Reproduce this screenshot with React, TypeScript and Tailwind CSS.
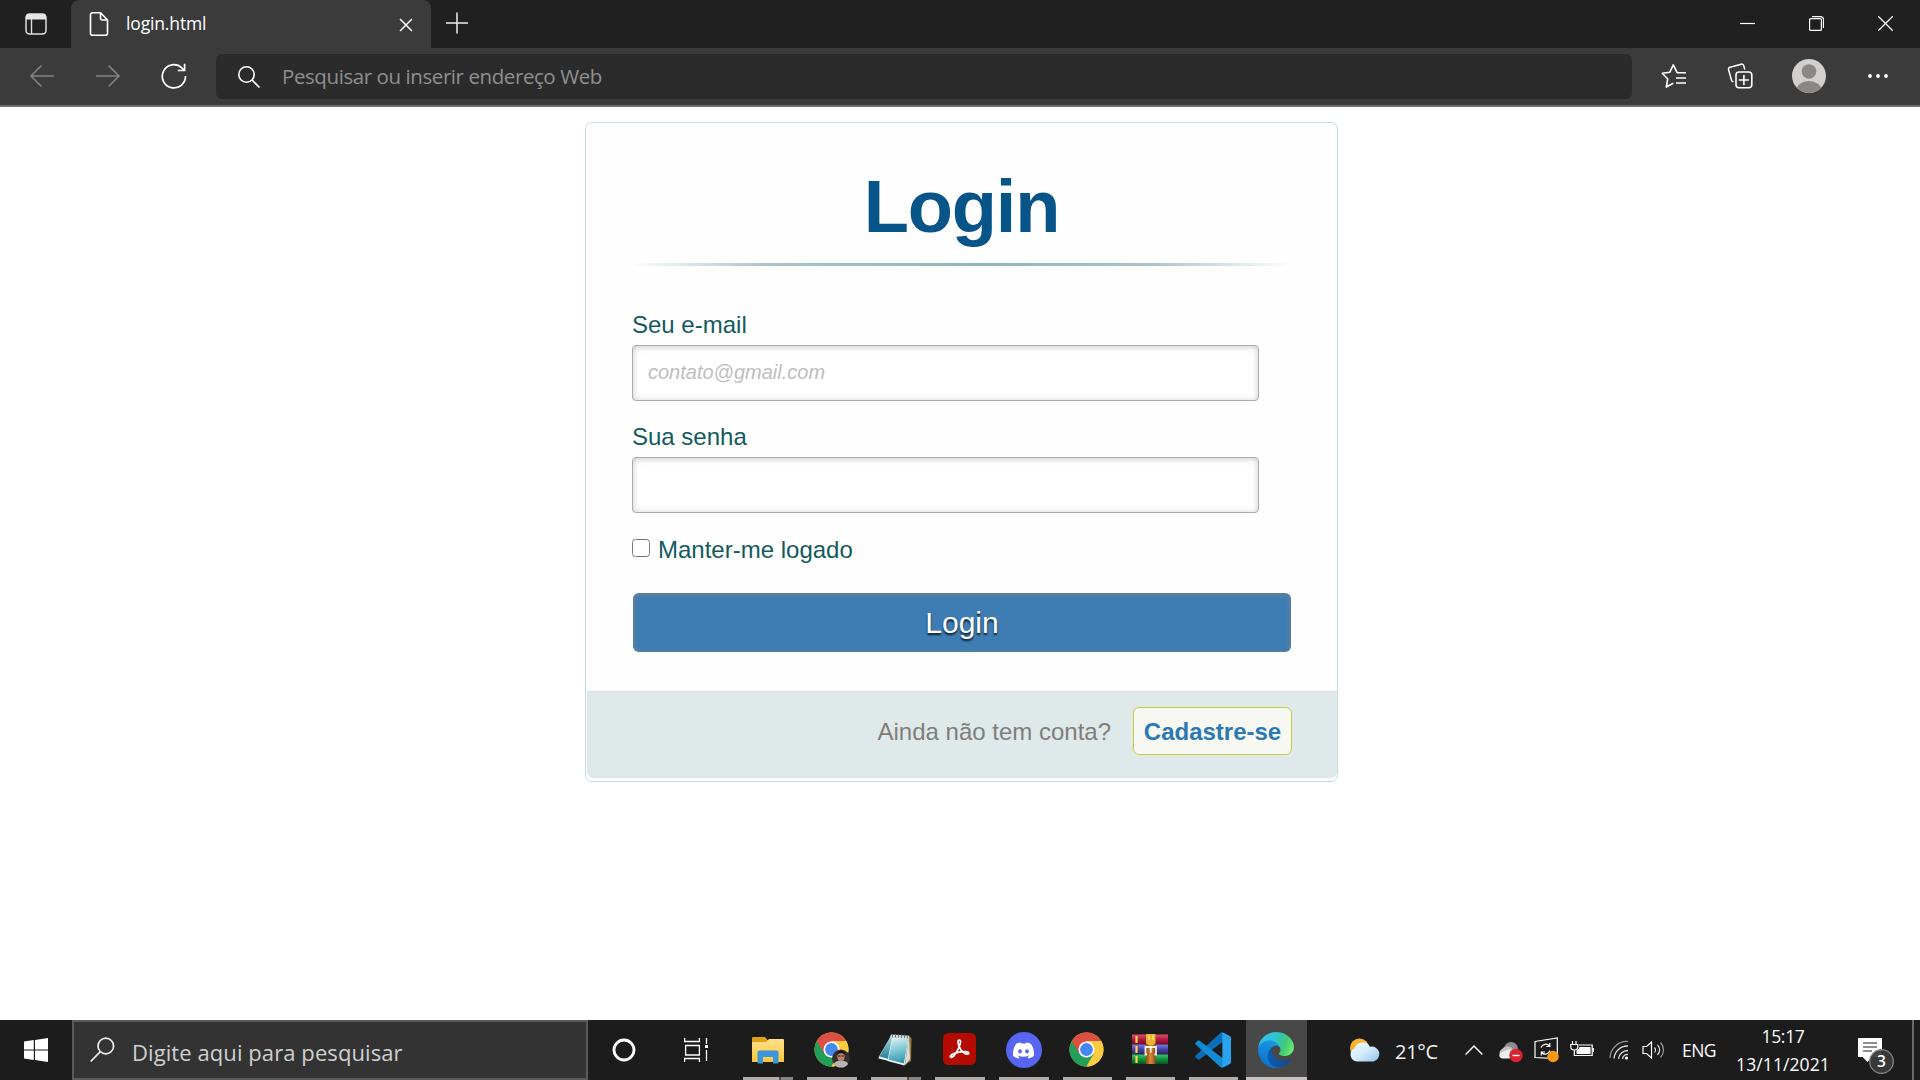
import React from "react";
import { FaDiscord } from "react-icons/fa";

type IconProps = { w: number; h: number; children: React.ReactNode; className?: string };

function Icon({ w, h, children, className = "" }: IconProps) {
  return (
    <svg width={w} height={h} viewBox={`0 0 ${w} ${h}`} fill="none" className={`block shrink-0 ${className}`}>
      {children}
    </svg>
  );
}

/* ---------- browser window ---------- */

function TitleBar() {
  return (
    <div className="flex h-12 bg-[#202020]">
      <div className="flex w-[71px] shrink-0 pl-[25px] pt-[13px]">
        <Icon w={22} h={22}>
          <rect x="1" y="1" width="20" height="20" rx="3.5" stroke="#ddd" strokeWidth="1.5" />
          <path d="M1 6.5V4a3 3 0 0 1 3-3h14a3 3 0 0 1 3 3v2.500z" fill="#e6e6e6" />
          <path d="M6.500 6v15" stroke="#ddd" strokeWidth="1.400" />
        </Icon>
      </div>
      <div className="flex h-12 w-[360px] shrink-0 rounded-t-lg bg-[#3b3b3b] pl-[18px]">
        <Icon w={20} h={26} className="mt-[11px]">
          <path
            d="M11.500 1.800H3.500a2 2 0 0 0-2 2v18.400a2 2 0 0 0 2 2h13a2 2 0 0 0 2-2V9zM11.500 1.800V7a2 2 0 0 0 2 2h5"
            stroke="#fff"
            strokeWidth="1.600"
            strokeLinejoin="round"
          />
        </Icon>
        <span className="ml-[17px] mt-[10px] w-[273px] whitespace-nowrap text-[17.5px] leading-[26px] tracking-[-0.15px] text-white">
          login.html
        </span>
        <Icon w={14} h={14} className="mt-[18px]">
          <path d="M1 1l12 12M13 1L1 13" stroke="#fff" strokeWidth="1.500" />
        </Icon>
      </div>
      <Icon w={22} h={22} className="ml-[15px] mt-3">
        <path d="M0 11h22M11 0.500v21" stroke="#eee" strokeWidth="1.500" />
      </Icon>
      <div className="ml-auto flex">
        <div className="flex w-[69px] justify-center pt-4">
          <Icon w={15} h={15}>
            <path d="M0 7.500h15" stroke="#fff" strokeWidth="1.200" />
          </Icon>
        </div>
        <div className="flex w-[69px] justify-center pt-4">
          <Icon w={15} h={15}>
            <rect x="0.600" y="2.600" width="11.800" height="11.800" rx="1" stroke="#fff" strokeWidth="1.200" />
            <path d="M3 0.600h8.500a3 3 0 0 1 3 3V12" stroke="#fff" strokeWidth="1.200" />
          </Icon>
        </div>
        <div className="flex w-[69px] justify-center pt-4">
          <Icon w={15} h={15}>
            <path d="M0.300 0.300l14.400 14.400M14.700 0.300L0.300 14.700" stroke="#fff" strokeWidth="1.300" />
          </Icon>
        </div>
      </div>
    </div>
  );
}

function ToolButton({ children, wide = false }: { children: React.ReactNode; wide?: boolean }) {
  return <div className={`flex h-[56px] shrink-0 items-center justify-center ${wide ? "w-[72px]" : "w-[66px]"}`}>{children}</div>;
}

function Toolbar() {
  return (
    <div className="flex h-[59px] border-b-2 border-[#6b6b6b] bg-[#3b3b3b] px-[9px]">
      <ToolButton>
        <Icon w={26} h={24}>
          <path d="M25 12H2M12.500 1.500L2 12l10.500 10.500" stroke="#858585" strokeWidth="1.500" />
        </Icon>
      </ToolButton>
      <ToolButton>
        <Icon w={26} h={24}>
          <path d="M1 12h23M13.500 1.500L24 12 13.500 22.500" stroke="#858585" strokeWidth="1.500" />
        </Icon>
      </ToolButton>
      <ToolButton>
        <Icon w={26} h={26}>
          <path d="M24.500 13A11.600 11.600 0 1 1 20.800 4.800L23.300 7.300" stroke="#fff" strokeWidth="1.700" />
          <path d="M23.600 0.800v6.700h-6.800" stroke="#fff" strokeWidth="1.700" />
        </Icon>
      </ToolButton>
      <div className="ml-[9px] mt-[6px] flex h-[45px] w-[1416px] shrink-0 items-center rounded-md bg-[#2b2b2b] pl-[21px]">
        <Icon w={24} h={24}>
          <circle cx="9.500" cy="9.500" r="7.700" stroke="#fff" strokeWidth="1.600" />
          <path d="M15 15l7.500 7.500" stroke="#fff" strokeWidth="1.700" />
        </Icon>
        <span className="-mt-[2px] ml-[21px] whitespace-nowrap text-[20.5px] leading-[28px] tracking-[-0.42px] text-[#8f8f8f]">
          Pesquisar ou inserir endereço Web
        </span>
      </div>
      <div className="ml-[9px] flex">
        <ToolButton>
          <Icon w={26} h={26}>
            <path
              d="M25 9.700H16.200L12.300 1.800 8.800 9.200 1.300 10.300 6.700 16 5.300 24 12.300 20.300M15 15h10M15 20h10"
              stroke="#fff"
              strokeWidth="1.600"
              strokeLinejoin="round"
            />
          </Icon>
        </ToolButton>
        <ToolButton>
          <Icon w={26} h={26}>
            <path
              d="M17.800 6.500L16.700 2.600a2 2 0 0 0-2.500-1.400L3 4.300A2 2 0 0 0 1.600 6.700L4.500 17.200a2.400 2.400 0 0 0 2 1.600"
              stroke="#fff"
              strokeWidth="1.500"
            />
            <rect x="9" y="9" width="15.800" height="15.800" rx="3" stroke="#fff" strokeWidth="1.600" />
            <path d="M16.900 12v10M11.900 17h10" stroke="#fff" strokeWidth="1.600" />
          </Icon>
        </ToolButton>
        <ToolButton wide>
          <Icon w={34} h={34}>
            <clipPath id="avatar">
              <circle cx="17" cy="17" r="17" />
            </clipPath>
            <g clipPath="url(#avatar)">
              <rect width="34" height="34" fill="#d2d0ce" />
              <circle cx="17" cy="12.500" r="7.300" fill="#8a8886" />
              <ellipse cx="17" cy="31.500" rx="12.500" ry="9.500" fill="#8a8886" />
            </g>
          </Icon>
        </ToolButton>
        <ToolButton>
          <Icon w={22} h={6}>
            <circle cx="3" cy="3" r="1.900" fill="#fff" />
            <circle cx="11" cy="3" r="1.900" fill="#fff" />
            <circle cx="19" cy="3" r="1.900" fill="#fff" />
          </Icon>
        </ToolButton>
      </div>
    </div>
  );
}

/* ---------- login page ---------- */

const fieldClass =
  "block h-14 w-[627px] rounded-[4px] border border-[#ababab] bg-white px-[15px] pb-[1px] text-[20px] shadow-[inset_0_1px_6px_rgba(150,150,150,0.5)] outline-none placeholder:italic placeholder:text-[#bebebe] placeholder:opacity-100";

function LoginCard() {
  return (
    <form className="ml-[585px] mt-[15px] flex h-[660px] w-[753px] flex-col rounded-[7px] border border-[#c6dde2] bg-[#fefefe] font-['Liberation_Sans',Arial,sans-serif]">
      <div className="flex-1 px-[46px] pt-[43px]">
        <h1 className="text-center text-[74px] font-bold leading-[82px] tracking-[-1.2px] text-[#075488]">Login</h1>
        <div className="mt-[15px] h-[3px] bg-[linear-gradient(to_right,rgba(147,184,189,0)_0%,rgba(147,184,189,0.8)_20%,rgba(147,180,184,1)_53%,rgba(147,184,189,0.8)_79%,rgba(147,184,189,0)_100%)]" />
        <label htmlFor="email" className="mt-[45px] block text-[24px] leading-[28px] text-[#135a5f]">
          Seu e-mail
        </label>
        <input id="email" placeholder="contato@gmail.com" className={`${fieldClass} mt-[6px]`} />
        <label htmlFor="senha" className="mt-[22px] block text-[24px] leading-[28px] text-[#135a5f]">
          Sua senha
        </label>
        <input id="senha" type="password" className={`${fieldClass} mt-[6px]`} />
        <label className="mt-[23px] flex h-7 text-[24px] leading-[28px] text-[#135a5f]">
          <input
            type="checkbox"
            className="mt-[3px] block size-[18px] shrink-0 appearance-none rounded-[3.5px] border-[1.5px] border-[#767676] bg-white"
          />
          <span className="ml-[8px]">Manter-me logado</span>
        </label>
        <button
          type="button"
          className="ml-px mt-[29px] block h-[59px] w-[658px] rounded-[6px] bg-[#3d7db3] text-[30px] leading-[59px] text-white shadow-[inset_0_1px_5px_1px_rgba(116,131,145,0.8)] [text-shadow:0_2px_2px_rgba(0,0,0,0.8)]"
        >
          Login
        </button>
      </div>
      <div className="mb-[3px] ml-px flex h-[87px] justify-end rounded-b-[6px] border-t border-[#d3e2e5] bg-[#e0e9e9] pr-[45px] pt-[15px] text-[24px]">
        <span className="mr-[22px] leading-[50px] text-[#7f7d7c]">Ainda não tem conta?</span>
        <a className="h-12 w-[159px] rounded-[6px] border border-[#c2ce3c] bg-[#f7f8f1] text-center font-bold leading-[48px] text-[#2a78b4]">
          Cadastre-se
        </a>
      </div>
    </form>
  );
}

/* ---------- taskbar icons ---------- */

function FolderIcon() {
  return (
    <Icon w={32} h={28}>
      <defs>
        <linearGradient id="folder" x1="0" y1="0" x2="0" y2="1">
          <stop offset="0" stopColor="#ffe08a" />
          <stop offset="1" stopColor="#fbc83c" />
        </linearGradient>
      </defs>
      <path d="M0 2a1 1 0 0 1 1-1h12l2.500 3H30v6H0z" fill="#dba21a" />
      <path d="M0 6h14l3-3h14a1 1 0 0 1 1 1v22H0z" fill="url(#folder)" />
      <path d="M5.500 27.500v-11a2 2 0 0 1 2-2h17a2 2 0 0 1 2 2v11H21v-5.500a1 1 0 0 0-1-1h-8a1 1 0 0 0-1 1v5.500z" fill="#3a96dd" />
    </Icon>
  );
}

function ChromeIcon({ profile = false }: { profile?: boolean }) {
  return (
    <Icon w={36} h={36}>
      <circle cx="17.500" cy="17.500" r="17" fill="#fbc93a" />
      <path d="M17.500 17.500L25 21.800 17.500 34.500A17 17 0 0 1 2.800 9z" fill="#1f9f57" />
      <path d="M25 21.800L17.500 34.500A17 17 0 0 0 32.200 9H17.500z" fill="#fccb3f" />
      <path d="M2.800 9A17 17 0 0 1 32.200 9H17.500L10 21.800z" fill="#dd4f43" />
      <circle cx="17.500" cy="17.500" r="8" fill="#fff" />
      <circle cx="17.500" cy="17.500" r="6.400" fill="#4688f1" />
      {profile && (
        <>
          <circle cx="27" cy="26.500" r="9" fill="#35302e" />
          <path d="M19.800 32a7.500 5 0 0 1 14.400 0 9 9 0 0 1-14.400 0z" fill="#b9b4b3" />
          <ellipse cx="27" cy="24.500" rx="3.700" ry="5" fill="#b98570" />
          <path d="M22.800 23c0-6 8.400-6 8.400 0-2-2.500-6-2.500-8.400 0z" fill="#191413" />
          <path d="M24 24h2.500M27.500 24H30" stroke="#2b1c19" strokeWidth="1" />
        </>
      )}
    </Icon>
  );
}

function NotepadIcon() {
  return (
    <Icon w={36} h={34}>
      <defs>
        <linearGradient id="pad" x1="0.300" y1="0" x2="0.500" y2="1">
          <stop offset="0" stopColor="#e3f3f5" />
          <stop offset="0.450" stopColor="#8accd8" />
          <stop offset="1" stopColor="#2f96ac" />
        </linearGradient>
        <linearGradient id="padBack" x1="0" y1="0" x2="0" y2="1">
          <stop offset="0" stopColor="#a9dbe3" />
          <stop offset="1" stopColor="#1f7f95" />
        </linearGradient>
      </defs>
      <path d="M31 4l2.500 1-.5 23-7 4z" fill="#9a7a38" />
      <path d="M31 3l1 23-5 6.500z" fill="#d6dcdc" />
      <path d="M13 3L1 23.500 0.500 25.500 11 28 20 4z" fill="#e9f0f1" />
      <path d="M13 3L1.500 23.500 11 26 20 4z" fill="url(#padBack)" />
      <path d="M14.500 3L31 4 26.500 32.500 9.500 28z" fill="#eef3f3" />
      <path d="M15 4L30.500 5 25.800 30.500 10.500 26.500z" fill="url(#pad)" />
      <path d="M13 1.500l18.500 1.300-.4 3L12 4.500z" fill="#d4d9d9" />
      <path d="M14.500 1v3.500M17.500 1v3.500M20.500 1.200v3.500M23.500 1.500V5M26.500 1.700v3.500M29.500 2v3.500" stroke="#6b777b" strokeWidth="1" />
    </Icon>
  );
}

function AcrobatIcon() {
  return (
    <Icon w={33} h={32}>
      <rect width="33" height="32" rx="5.500" fill="#b30b00" />
      <path
        d="M15 9.500c-.5-3 3-3.300 2.500-.3-.4 2.800-3 9-6.300 13.200-1.500 1.900-4.700 3-3.700.6 1.200-2.600 9-4.400 15-4.300 4.200.1 4 2.800 1.300 2.400-3.800-.5-8.300-6-8.800-11.600z"
        stroke="#fff"
        strokeWidth="1.700"
        strokeLinejoin="round"
      />
    </Icon>
  );
}

function DiscordIcon() {
  return (
    <div className="mr-px flex size-9 items-center justify-center rounded-full bg-[#5865f2]">
      <FaDiscord size={23} color="#fff" />
    </div>
  );
}

function WinrarIcon() {
  return (
    <Icon w={36} h={32}>
      <defs>
        <linearGradient id="bookA" x1="0" y1="0" x2="0" y2="1">
          <stop offset="0" stopColor="#e0506a" />
          <stop offset="0.500" stopColor="#b3183f" />
          <stop offset="1" stopColor="#6f0d28" />
        </linearGradient>
        <linearGradient id="bookB" x1="0" y1="0" x2="0" y2="1">
          <stop offset="0" stopColor="#7d7ad8" />
          <stop offset="0.500" stopColor="#4642a5" />
          <stop offset="1" stopColor="#25225f" />
        </linearGradient>
        <linearGradient id="bookC" x1="0" y1="0" x2="0" y2="1">
          <stop offset="0" stopColor="#3fc463" />
          <stop offset="0.500" stopColor="#12903c" />
          <stop offset="1" stopColor="#075320" />
        </linearGradient>
        <linearGradient id="strap" x1="0" y1="0" x2="1" y2="0">
          <stop offset="0" stopColor="#8f4a12" />
          <stop offset="0.500" stopColor="#d98a3a" />
          <stop offset="1" stopColor="#8f4a12" />
        </linearGradient>
      </defs>
      <rect y="1.500" width="36" height="10" fill="url(#bookA)" />
      <rect y="11.500" width="36" height="10" fill="url(#bookB)" />
      <rect y="21.500" width="36" height="9.500" fill="url(#bookC)" />
      <path d="M4.500 3v7M4.500 13v7M4.500 23v7" stroke="#ffd54a" strokeWidth="2.200" />
      <rect x="14" y="1" width="9.500" height="30" fill="url(#strap)" />
      <path d="M14 1h9.500v9l-2 2h-5.500l-2-2z" fill="#e8b32f" />
      <path d="M17 2v5M21 2v5" stroke="#fff0a0" strokeWidth="1" />
      <path d="M15 21.500h-1.500v-7.500h10.500v7.500h-1.500" stroke="#f0ece6" strokeWidth="1.800" />
      <path d="M18.700 13.500v6" stroke="#fff" strokeWidth="1.600" />
    </Icon>
  );
}

function VsCodeIcon() {
  return (
    <svg width="36" height="36" viewBox="0 0 100 100" className="mr-px block">
      <path d="M97 13L78 3Q73 0 69 4L2 65q-3 3 0 5.500l6 5.500q2.500 2 5 0L76 28z" fill="#0a6fb8" />
      <path d="M97 87L78 97q-5 3-9-1L2 35q-3-3 0-5.500L8 24q2.500-2 5 0l63 48z" fill="#128bd6" />
      <path d="M74 2q2-1.500 5 0l18 9q3 2 3 5v68q0 3-3 5l-18 9q-3 1.500-9-2 6 3 6-4V8q0-7-6-4z" fill="#2aa3ee" />
    </svg>
  );
}

function EdgeIcon() {
  return (
    <svg width="36" height="36" viewBox="0 0 256 256" className="mr-px block">
      <defs>
        <linearGradient id="edgeA" x1="0" y1="0.500" x2="1" y2="0.500">
          <stop offset="0" stopColor="#0d5cb0" />
          <stop offset="1" stopColor="#114a8b" />
        </linearGradient>
        <linearGradient id="edgeB" x1="0.700" y1="0" x2="0.300" y2="1">
          <stop offset="0" stopColor="#1b9de2" />
          <stop offset="0.500" stopColor="#1484d8" />
          <stop offset="1" stopColor="#0a6fcc" />
        </linearGradient>
        <linearGradient id="edgeC" x1="0" y1="0.300" x2="1" y2="0.600">
          <stop offset="0" stopColor="#35c1f1" />
          <stop offset="0.400" stopColor="#2bc3d2" />
          <stop offset="0.750" stopColor="#42c979" />
          <stop offset="1" stopColor="#66eb6e" />
        </linearGradient>
      </defs>
      <path
        d="M231.100 190.500c-3.400 1.800-6.900 3.400-10.500 4.700-11.500 4.300-23.700 6.500-36 6.500-47.400 0-88.700-32.600-88.700-74.500.1-11.400 6.400-21.900 16.400-27.300-42.900 1.800-53.900 46.500-53.900 72.700 0 74.100 68.300 81.600 83 81.600 7.900 0 19.800-2.300 27-4.600l1.300-.4c27.600-9.500 51-28.100 66.600-52.800 1.200-1.900.6-4.300-1.200-5.500-1.300-.8-2.800-.9-4-.4z"
        fill="url(#edgeA)"
      />
      <path
        d="M105.700 241.400c-8.900-5.500-16.600-12.800-22.700-21.300-26.300-36-18.400-86.500 17.600-112.800 3.800-2.700 7.700-5.200 11.900-7.200 3.100-1.500 8.400-4.100 15.500-4 10.100.1 19.600 4.900 25.700 13 4 5.400 6.300 11.900 6.400 18.700 0-.2 24.500-79.600-80-79.600-43.900 0-80 41.700-80 78.200-.2 19.300 4 38.500 12.100 56 27.600 58.800 94.800 87.600 156.400 67.100-21.100 6.600-44.100 3.700-62.900-8.100z"
        fill="url(#edgeB)"
      />
      <path
        d="M152.300 148.900c-.9 1-3.400 2.500-3.400 5.600 0 2.600 1.700 5.200 4.800 7.300 14.300 10 41.400 8.600 41.500 8.600 10.700 0 21.100-2.900 30.300-8.300 18.800-11 30.400-31.100 30.400-52.900.3-22.400-8-37.300-11.300-43.900C223.500 23.900 177.700 0 128 0 58 0 1 56.200 0 126.200c.5-36.500 36.800-66 80-66 3.500 0 23.500.3 42 10.100 16.300 8.600 24.900 18.900 30.800 29.200 6.200 10.700 7.300 24.100 7.300 29.500 0 5.300-2.700 13.300-7.800 19.900z"
        fill="url(#edgeC)"
      />
    </svg>
  );
}

function WeatherIcon() {
  return (
    <Icon w={32} h={26}>
      <defs>
        <linearGradient id="sun" x1="0" y1="0" x2="0" y2="1">
          <stop offset="0" stopColor="#fdb92e" />
          <stop offset="1" stopColor="#f9a11b" />
        </linearGradient>
        <linearGradient id="cloud" x1="0" y1="0" x2="1" y2="1">
          <stop offset="0" stopColor="#f1faff" />
          <stop offset="0.500" stopColor="#d3ecfb" />
          <stop offset="1" stopColor="#8fc5ec" />
        </linearGradient>
      </defs>
      <circle cx="10.500" cy="11" r="9.500" fill="url(#sun)" />
      <path d="M8 24.500a7 7 0 0 1-2.500-13.300 8.500 8.500 0 0 1 15.500-1.500 7.500 7.500 0 1 1 3.500 14.800z" fill="url(#cloud)" />
    </Icon>
  );
}

/* ---------- taskbar ---------- */

function TaskApp({ children, split = false, narrow = false }: { children: React.ReactNode; split?: boolean; narrow?: boolean }) {
  return (
    <div className={`flex h-[60px] shrink-0 flex-col items-center ${narrow ? "w-[63px]" : "w-16"}`}>
      <div className="flex h-[57px] items-center justify-center pt-[3px]">{children}</div>
      <div className={`flex h-[3px] bg-[#b0aeac] ${narrow ? "w-[49px]" : "w-[50px]"}`}>
        {split && <div className="ml-9 h-[3px] w-[14px] border-l-2 border-[#4c4c4c] bg-[#858483]" />}
      </div>
    </div>
  );
}

function Taskbar() {
  return (
    <div className="flex h-[60px] shrink-0 bg-[#1c1c1c]">
      <div className="flex w-[72px] shrink-0 items-center justify-center">
        <Icon w={24} h={24}>
          <path d="M0 3.400L9.800 2v9.400H0zM11 1.900L24 0v11.400H11zM0 12.600h9.800V22L0 20.600zM11 12.600h13V24l-13-1.900z" fill="#fff" />
        </Icon>
      </div>
      <div className="flex w-[516px] shrink-0 items-center border-2 border-[#5a5a5a] bg-[#333] pl-4">
        <Icon w={25} h={26}>
          <circle cx="15.800" cy="9" r="7.800" stroke="#eee" strokeWidth="1.700" />
          <path d="M10.300 14.600L0.700 24.500" stroke="#eee" strokeWidth="1.700" />
        </Icon>
        <span className="ml-[17px] mt-[3px] whitespace-nowrap text-[22px] leading-[30px] tracking-[0.08px] text-[#d0d0d0]">
          Digite aqui para pesquisar
        </span>
      </div>
      <div className="flex w-[72px] shrink-0 items-center justify-center">
        <Icon w={24} h={24}>
          <circle cx="12" cy="12" r="10" stroke="#fff" strokeWidth="2.800" />
        </Icon>
      </div>
      <div className="mr-1 flex w-[72px] shrink-0 items-center justify-center">
        <Icon w={24} h={24}>
          <path
            d="M.600 0v3.500H15.400V0M.600 24v-3.500H15.400V24M1.600 7.500H15.400v9.500H1.600zM22.500 0v6M22.500 12v11"
            stroke="#fff"
            strokeWidth="1.300"
          />
          <rect x="21" y="7" width="3" height="3" fill="#fff" />
        </Icon>
      </div>
      <TaskApp split>
        <FolderIcon />
      </TaskApp>
      <TaskApp>
        <ChromeIcon profile />
      </TaskApp>
      <TaskApp split>
        <div className="pb-px">
          <NotepadIcon />
        </div>
      </TaskApp>
      <TaskApp>
        <div className="pb-[3px] pr-px">
          <AcrobatIcon />
        </div>
      </TaskApp>
      <TaskApp>
        <DiscordIcon />
      </TaskApp>
      <TaskApp narrow>
        <div className="pr-px">
          <ChromeIcon />
        </div>
      </TaskApp>
      <TaskApp narrow>
        <div className="pb-[2px] pr-px">
          <WinrarIcon />
        </div>
      </TaskApp>
      <TaskApp narrow>
        <VsCodeIcon />
      </TaskApp>
      <div className="ml-px flex w-[61px] shrink-0 items-center justify-center border-b-[3px] border-[#c3c1bf] bg-[#484848] pt-[3px]">
        <EdgeIcon />
      </div>
      <div className="ml-[42px] flex shrink-0 items-center">
        <WeatherIcon />
        <span className="ml-[14px] mt-[3px] w-[46px] whitespace-nowrap text-[20px] leading-[28px] tracking-[-0.3px] text-[#f2f2f2]">
          21°C
        </span>
        <Icon w={18} h={12} className="ml-6">
          <path d="M.6 10.500L9 2l8.400 8.500" stroke="#fff" strokeWidth="1.500" />
        </Icon>
        <Icon w={25} h={24} className="ml-[15px] mt-1">
          <circle cx="13" cy="9" r="7" fill="#8c8c8c" />
          <path d="M5 18a5 5 0 0 1-1-9 7 7 0 0 1 10-1l3 10z" fill="#c4c4c4" />
          <path d="M4 18.500c-3-1-3.500-3.500-1.500-6L12 9v9.500z" fill="#eee" />
          <circle cx="18" cy="15.500" r="6.700" fill="#d9232e" />
          <path d="M14.500 15.500h7" stroke="#fff" strokeWidth="1.400" />
        </Icon>
        <Icon w={25} h={26} className="ml-[11px]">
          <path d="M1 4.500L23.300 1v20.500L1 20.500z" stroke="#fff" strokeWidth="1.200" />
          <path d="M7 10.500a5 5 0 0 1 8.500-1.500M15.800 6v3.500h-3.500M16 13.500a5 5 0 0 1-8.500 2M7.300 18.500V15H11" stroke="#fff" strokeWidth="1.200" />
          <circle cx="19" cy="19.500" r="5.700" fill="#f79a10" />
        </Icon>
        <Icon w={24} h={24} className="ml-[11px] mt-px">
          <path d="M2.500 2v4M6 2v4M.8 5.500h7v2.500a3.500 3 0 0 1-7 0zM4.300 11v5.500H22.200V6H9" stroke="#fff" strokeWidth="1.200" />
          <path d="M9.500 8H20.500v7H6.500v-3.500a4 4 0 0 0 3-3.500z" fill="#fff" />
          <path d="M23.300 9v4" stroke="#fff" strokeWidth="1.400" />
        </Icon>
        <Icon w={24} h={24} className="ml-3">
          <path d="M4 20A17 17 0 0 1 22 3.500" stroke="#999" strokeWidth="1.200" />
          <path d="M8 20.500A13.500 13.500 0 0 1 22 8M12.500 20.800A9.500 9.500 0 0 1 22 12.500M16.500 21A5 5 0 0 1 22 16.500" stroke="#ddd" strokeWidth="1.300" />
          <circle cx="20.500" cy="20" r="1.600" fill="#fff" />
        </Icon>
        <Icon w={24} h={24} className="ml-3">
          <path d="M1 8.500h3.500L9.500 4v16l-5-4.500H1z" stroke="#fff" strokeWidth="1.200" />
          <path d="M12.500 9.500a3.500 3.500 0 0 1 0 5M15.500 7a7 7 0 0 1 0 10" stroke="#ddd" strokeWidth="1.200" />
          <path d="M18.500 4.500a11 11 0 0 1 0 15" stroke="#999" strokeWidth="1.200" />
        </Icon>
        <span className="ml-3 w-[42px] text-center text-[17.5px] leading-[24px] tracking-[-0.5px] text-white">ENG</span>
      </div>
      <div className="flex w-[126px] shrink-0 flex-col items-center pt-[2px] text-[17.5px] leading-[28px] tracking-[0.1px] text-white">
        <span className="tracking-[-0.3px]">15:17</span>
        <span>13/11/2021</span>
      </div>
      <Icon w={38} h={38} className="ml-3 mt-[17px]">
        <path d="M0 1h24v19H13.500v0L9.500 25 4.500 20H0z" fill="#fff" />
        <path d="M5 6h14M5 10h14M5 14h9" stroke="#1c1c1c" strokeWidth="1.200" />
        <circle cx="23.500" cy="24.500" r="11.800" fill="#3a3a3a" fillOpacity="0.950" stroke="#8a8a8a" strokeWidth="1.200" />
        <text x="23.500" y="30" textAnchor="middle" fontSize="15.500" fontWeight="600" fill="#fff">
          3
        </text>
      </Icon>
      <div className="ml-auto mr-[6px] w-[2px] bg-[#6a6a6a]" />
    </div>
  );
}

export default function App() {
  return (
    <div className="flex h-[1080px] w-[1920px] flex-col overflow-hidden bg-white font-['Open_Sans','Noto_Sans',sans-serif]">
      <TitleBar />
      <Toolbar />
      <main className="flex-1">
        <LoginCard />
      </main>
      <Taskbar />
    </div>
  );
}
